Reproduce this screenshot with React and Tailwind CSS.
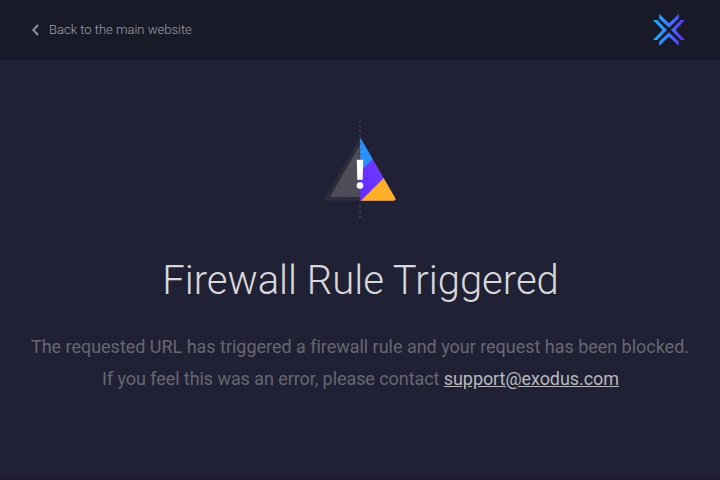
function ExodusLogo() {
  return (
    <svg width="34" height="34" viewBox="0 0 34 34" aria-hidden="true">
      <defs>
        <linearGradient id="logo" gradientUnits="userSpaceOnUse" x1="1" y1="14" x2="33" y2="18">
          <stop offset="0" stopColor="#16b4ff" />
          <stop offset="0.5" stopColor="#3d7aff" />
          <stop offset="1" stopColor="#6428f8" />
        </linearGradient>
      </defs>
      <g fill="url(#logo)">
        <path d="M7.2 1L17 10.2 26.8 1v4.4L17 14.7 7.2 5.4z" />
        <path d="M7.2 33L17 23.8 26.8 33v-4.4L17 19.3 7.2 28.6z" />
        <path d="M1 7h4.2l9.8 10-9.8 10H1l9.5-10z" />
        <path d="M33 7h-4.2l-9.8 10 9.8 10H33l-9.5-10z" />
      </g>
    </svg>
  );
}

function WarningIcon() {
  return (
    <svg width="74" height="98" viewBox="0 0 74 98" className="mx-auto block" aria-hidden="true">
      <defs>
        <clipPath id="right">
          <path d="M37 17.3l35 60.5q1.4 2.9-1.7 2.9H37z" />
        </clipPath>
        <linearGradient id="grey" x1="1" y1="0" x2="0" y2="1">
          <stop offset="0" stopColor="#50505a" />
          <stop offset="1" stopColor="#4c4b57" />
        </linearGradient>
        <linearGradient id="purple" x1="1" y1="0" x2="0" y2="1">
          <stop offset="0" stopColor="#7650ff" />
          <stop offset="1" stopColor="#6527ff" />
        </linearGradient>
      </defs>
      <path d="M37 17.3L2 77.8q-1.4 2.9 1.7 2.9H37z" fill="#2d2c3b" />
      <path d="M37 25L6.8 77H37z" fill="url(#grey)" />
      <g clipPath="url(#right)">
        <path d="M37 15h38v66H37z" fill="url(#purple)" />
        <path d="M37 15h25v12L37 51.5z" fill="#2b91fa" />
        <path d="M37 81.7L62 56.7l12 1.8v23z" fill="#ffae27" />
      </g>
      <path d="M37 .5v16M37 85.8v12" stroke="#4a4956" strokeWidth="1.8" strokeDasharray="1.5 3.5" />
      <path d="M36.8 18v62" stroke="#353448" strokeWidth="0.8" strokeDasharray="2.5 2.5" />
      <path d="M33.8 39.8h6.4l-.5 20h-5.4z" fill="#fff" />
      <circle cx="37" cy="65.6" r="3.3" fill="#fff" />
    </svg>
  );
}

export default function App() {
  return (
    <div className="flex h-screen flex-col overflow-hidden bg-[#202134] font-['Roboto',sans-serif]">
      <header className="flex h-[60px] shrink-0 items-center justify-between bg-[#181a28] pr-[34px] pl-8">
        <a href="#" className="flex items-center text-[13px] font-light text-[#a0a0a8]">
          <svg width="7" height="12" viewBox="0 0 7 12" className="mr-2.5" fill="none" aria-hidden="true">
            <path d="M6 1L1.2 6 6 11" stroke="#94949c" strokeWidth="1.9" />
          </svg>
          Back to the main website
        </a>
        <ExodusLogo />
      </header>
      <main className="flex-1 pt-[60px] text-center">
        <WarningIcon />
        <h1 className="mt-[38px] pl-px text-[40px] leading-[50px] font-light text-[#d8d8da]">
          Firewall Rule Triggered
        </h1>
        <p className="mt-[25px] text-[18px] leading-8 whitespace-nowrap text-[#676772]">
          <span className="tracking-[-0.025px]">
            The requested URL has triggered a firewall rule and your request has been blocked.
          </span>
          <br />
          <span className="pl-px tracking-[-0.07px]">
            If you feel this was an error, please contact{" "}
            <a href="mailto:support@exodus.com" className="text-[#b8b8bd] underline">
              support@exodus.com
            </a>
          </span>
        </p>
      </main>
      <footer className="h-1 shrink-0 bg-[#1d1b2f]" />
    </div>
  );
}
